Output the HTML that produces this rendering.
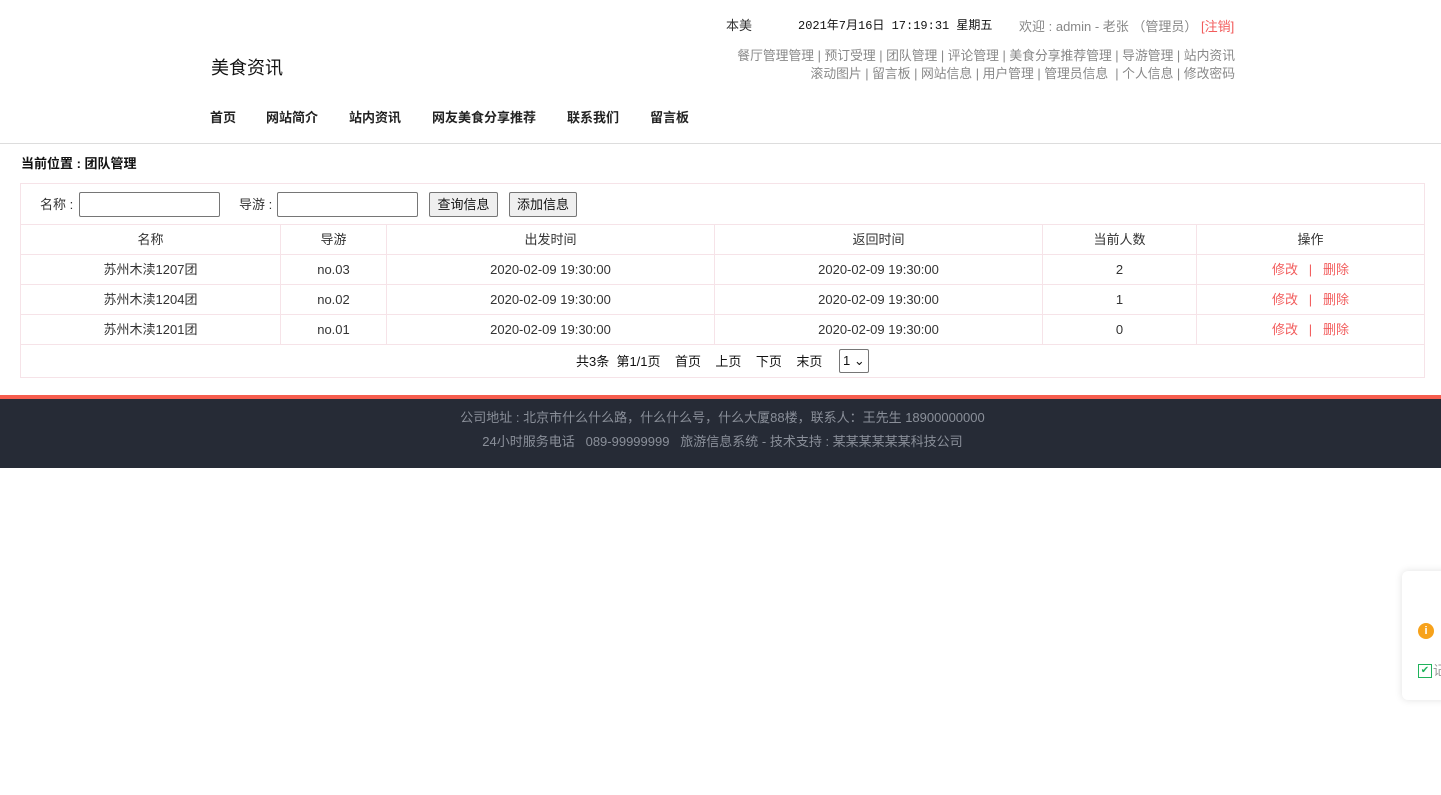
<!DOCTYPE html><html><head><meta charset="utf-8"><style>
body{margin:0;font-family:"Liberation Sans","Noto Sans CJK SC",sans-serif;font-size:13px;line-height:15px;color:#333;background:#fff;width:1441px;height:795px;position:relative;overflow:hidden}
.a{position:absolute;white-space:nowrap}
.g{color:#888}
table{position:absolute;left:20px;top:224px;border-collapse:collapse;width:1405px}
td{border:1px solid #f6e3e8;text-align:center;height:28px;padding:0 0 1px;font-size:13px;line-height:15px;color:#333}
.r{color:#f25c5c}
</style></head><body>
<div class="a" style="left:726px;top:18px;color:#333">本美</div>
<div class="a" style="left:798px;top:19px;font-family:'Liberation Mono','Noto Sans CJK SC',monospace;font-size:12px;color:#111">2021年7月16日 17:19:31 星期五</div>
<div class="a g" style="left:1019px;top:19px">欢迎 : admin - 老张 （管理员） <span class="r">[注销]</span></div>
<div class="a g" style="right:206px;top:48px;font-size:12.8px">餐厅管理管理 | 预订受理 | 团队管理 | 评论管理 | 美食分享推荐管理 | 导游管理 | 站内资讯</div>
<div class="a g" style="right:206px;top:66px;font-size:12.8px">滚动图片 | 留言板 | 网站信息 | 用户管理 | 管理员信息 &nbsp;| 个人信息 | 修改密码</div>
<div class="a" style="left:211px;top:58px;font-size:18px;line-height:20px;color:#111">美食资讯</div>
<div class="a" style="left:210px;top:110px;font-weight:bold;color:#222">首页</div>
<div class="a" style="left:266px;top:110px;font-weight:bold;color:#222">网站简介</div>
<div class="a" style="left:349px;top:110px;font-weight:bold;color:#222">站内资讯</div>
<div class="a" style="left:432px;top:110px;font-weight:bold;color:#222">网友美食分享推荐</div>
<div class="a" style="left:567px;top:110px;font-weight:bold;color:#222">联系我们</div>
<div class="a" style="left:650px;top:110px;font-weight:bold;color:#222">留言板</div>
<div class="a" style="left:0;top:143px;width:1441px;border-top:1px solid #ddd"></div>
<div class="a" style="left:21px;top:156px;font-weight:bold;color:#111">当前位置 : 团队管理</div>
<div class="a" style="left:20px;top:183px;width:1403px;height:41px;border:1px solid #f6e3e8;border-bottom:none"></div>
<div class="a" style="left:40px;top:197px">名称 :</div>
<div class="a" style="left:79px;top:192px;width:139px;height:23px;border:1px solid #767676;border-radius:2px"></div>
<div class="a" style="left:239px;top:197px">导游 :</div>
<div class="a" style="left:277px;top:192px;width:139px;height:23px;border:1px solid #767676;border-radius:2px"></div>
<div class="a" style="left:429px;top:192px;width:67px;height:23px;border:1px solid #767676;border-radius:2px;background:#efefef;text-align:center;line-height:23px;color:#111">查询信息</div>
<div class="a" style="left:509px;top:192px;width:66px;height:23px;border:1px solid #767676;border-radius:2px;background:#efefef;text-align:center;line-height:23px;color:#111">添加信息</div>
<table>
<tr><td style="width:259px">名称</td><td style="width:105px">导游</td><td style="width:327px">出发时间</td><td style="width:327px">返回时间</td><td style="width:153px">当前人数</td><td>操作</td></tr>
<tr><td>苏州木渎1207团</td><td>no.03</td><td>2020-02-09 19:30:00</td><td>2020-02-09 19:30:00</td><td>2</td><td class="r">修改 &nbsp;&nbsp;| &nbsp;&nbsp;删除</td></tr>
<tr><td>苏州木渎1204团</td><td>no.02</td><td>2020-02-09 19:30:00</td><td>2020-02-09 19:30:00</td><td>1</td><td class="r">修改 &nbsp;&nbsp;| &nbsp;&nbsp;删除</td></tr>
<tr><td>苏州木渎1201团</td><td>no.01</td><td>2020-02-09 19:30:00</td><td>2020-02-09 19:30:00</td><td>0</td><td class="r">修改 &nbsp;&nbsp;| &nbsp;&nbsp;删除</td></tr>
<tr><td colspan="6" style="height:31px"></td></tr>
</table>
<div class="a" style="left:576px;top:354px;color:#111">共3条&nbsp; 第1/1页 &nbsp;&nbsp; 首页 &nbsp;&nbsp; 上页 &nbsp;&nbsp; 下页 &nbsp;&nbsp; 末页</div>
<div class="a" style="left:839px;top:349px;width:30px;height:24px;border:1px solid #767676;border-radius:2px;line-height:22px;padding-left:3px;box-sizing:border-box;color:#111">1 ⌄</div>
<div class="a" style="left:0;top:395px;width:1441px;height:4px;background:#f65d4e"></div>
<div class="a" style="left:0;top:399px;width:1441px;height:69px;background:#262b36"></div>
<div class="a" style="left:0;top:410px;width:1445px;text-align:center;color:#8a8f99">公司地址 : 北京市什么什么路，什么什么号，什么大厦88楼，联系人：王先生 18900000000</div>
<div class="a" style="left:0;top:434px;width:1445px;text-align:center;color:#8a8f99">24小时服务电话 &nbsp; 089-99999999 &nbsp; 旅游信息系统 - 技术支持 : 某某某某某某科技公司</div>
<div class="a" style="left:1402px;top:571px;width:60px;height:129px;background:#fff;border-radius:6px;box-shadow:0 0 8px rgba(0,0,0,.12)"></div>
<div class="a" style="left:1418px;top:623px;width:16px;height:16px;border-radius:50%;background:#f7a21b;color:#fff;font-size:11px;font-weight:bold;text-align:center;line-height:16px">i</div>
<div class="a" style="left:1418px;top:664px;width:12px;height:12px;border:1px solid #1fb35c;color:#1fb35c;font-size:10px;line-height:12px;text-align:center">✔</div>
<div class="a" style="left:1433px;top:663px;color:#999">记</div>
</body></html>
